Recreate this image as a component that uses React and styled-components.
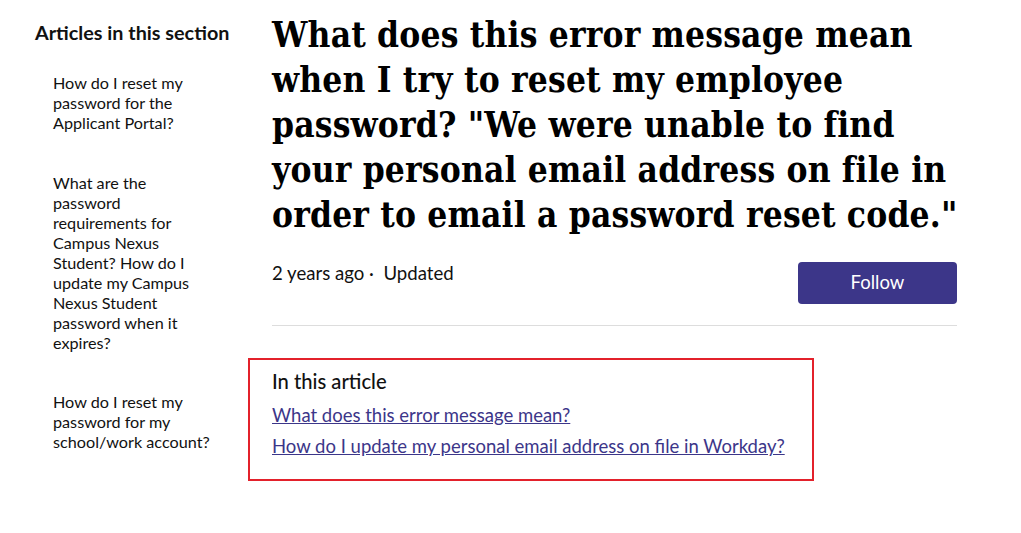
import React from "react";
import styled, { createGlobalStyle } from "styled-components";

const Global = createGlobalStyle`
  html, body { margin: 0; padding: 0; background: #fff; }
  body { font-family: "Lato", "Noto Sans", sans-serif; color: #111; }
  * { box-sizing: border-box; }
`;

const Page = styled.div`
  display: flex;
  align-items: flex-start;
  padding-left: 35px;
  gap: 37px;
`;

const Sidebar = styled.nav`
  width: 200px;
  flex: none;
  padding-top: 20px;
`;

const SideTitle = styled.h2`
  margin: 0;
  font-size: 19.8px;
  line-height: 24px;
  font-weight: 700;
  white-space: nowrap;
`;

const SideList = styled.ul`
  list-style: none;
  margin: 29px 0 0;
  padding: 0 0 0 18px;
  display: flex;
  flex-direction: column;
  gap: 39.5px;
`;

const SideItem = styled.li`
  width: 160px;
  font-size: 16.2px;
  line-height: 20px;
`;

const Main = styled.main`
  width: 685px;
  flex: none;
  padding-top: 12px;
`;

const Title = styled.h1`
  margin: 0 -10px 0 0;
  font-family: "DejaVu Serif", serif;
  font-stretch: condensed;
  font-weight: 700;
  font-size: 35px;
  letter-spacing: 0.18px;
  line-height: 45px;
  color: #000;
`;

const MetaRow = styled.div`
  display: flex;
  justify-content: space-between;
  align-items: flex-start;
  margin-top: 25px;
  padding-bottom: 21px;
  border-bottom: 1px solid #ddd;
`;

const Meta = styled.div`
  font-size: 18.6px;
  line-height: 22px;
`;

const FollowButton = styled.button`
  width: 159px;
  height: 42px;
  border: none;
  border-radius: 4px;
  background: #3c3689;
  color: #fff;
  font-family: inherit;
  font-size: 18.5px;
  padding-bottom: 4px;
`;

const Toc = styled.section`
  margin: 32px 0 0 -24px;
  width: 566px;
  border: 2px solid #e3212b;
  padding: 9px 22px 17px;
`;

const TocTitle = styled.h3`
  margin: 0 0 7px;
  font-size: 20.2px;
  line-height: 24px;
  font-weight: 500;
`;

const TocLink = styled.a`
  display: block;
  font-size: 18.5px;
  line-height: 31px;
  color: #3c3689;
  text-decoration: underline;
`;

export default function App() {
  return (
    <>
      <Global />
      <Page>
        <Sidebar>
          <SideTitle>Articles in this section</SideTitle>
          <SideList>
            <SideItem>How do I reset my password for the Applicant Portal?</SideItem>
            <SideItem>
              What are the password requirements for Campus Nexus Student? How do I
              update my Campus Nexus Student password when it expires?
            </SideItem>
            <SideItem>How do I reset my password for my school/work account?</SideItem>
          </SideList>
        </Sidebar>
        <Main>
          <Title>
            What does this error message mean when I try to reset my employee
            password? "We were unable to find your personal email address on file in
            order to email a password reset code."
          </Title>
          <MetaRow>
            <Meta>2 years ago · &nbsp;Updated</Meta>
            <FollowButton>Follow</FollowButton>
          </MetaRow>
          <Toc>
            <TocTitle>In this article</TocTitle>
            <TocLink href="#a">What does this error message mean?</TocLink>
            <TocLink href="#b">How do I update my personal email address on file in Workday?</TocLink>
          </Toc>
        </Main>
      </Page>
    </>
  );
}
